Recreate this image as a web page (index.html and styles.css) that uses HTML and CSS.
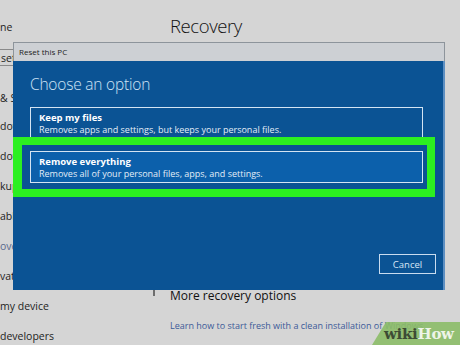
FILE: index.html
```html
<!DOCTYPE html>
<html lang="en">

<head>
    <meta charset="UTF-8">
    <meta name="viewport" content="width=device-width, initial-scale=1.0">
    <title>Recovery</title>
    <link rel="stylesheet" href="styles.css">
</head>

<body>
    <div class="page">
        <div class="sidebar">
            <p class="side-item home">ne</p>
            <div class="search">sett</div>
            <p class="side-item group">&amp; Se</p>
            <p class="side-item">dow</p>
            <p class="side-item">dow</p>
            <p class="side-item">kup</p>
            <p class="side-item">able</p>
            <p class="side-item active">ove</p>
            <p class="side-item">vat</p>
            <p class="side-item">my device</p>
            <p class="side-item">developers</p>
        </div>

        <div class="main">
            <h1 class="title">Recovery</h1>
            <div class="more">
                <span class="divider"></span>
                <h2>More recovery options</h2>
            </div>
            <a class="link" href="#">Learn how to start fresh with a clean installation of Windows</a>
        </div>
    </div>

    <div class="dialog">
        <div class="dialog-bar">Reset this PC</div>
        <div class="dialog-body">
            <h3 class="dialog-head">Choose an option</h3>
            <div class="option">
                <b>Keep my files</b>
                <span>Removes apps and settings, but keeps your personal files.</span>
            </div>
            <div class="option selected">
                <b>Remove everything</b>
                <span>Removes all of your personal files, apps, and settings.</span>
            </div>
            <div class="dialog-foot">
                <button class="cancel">Cancel</button>
            </div>
        </div>
    </div>

    <div class="badge"><span class="wiki">wiki</span><span class="how">How</span></div>
</body>

</html>
```

FILE: styles.css
```css
body {
    margin: 0;
    width: 460px;
    height: 345px;
    overflow: hidden;
    position: relative;
    background-color: #d5d5d5;
    font-family: "Open Sans", "Noto Sans", sans-serif;
    color: #1e1e1e;
}

.page {
    display: flex;
    height: 100%;
}

.sidebar {
    width: 153px;
    padding-top: 19px;
    font-size: 10.5px;
}

.side-item {
    margin: 0;
    height: 30px;
    line-height: 16px;
}

.side-item.group {
    margin-top: 24px;
    height: 28px;
}

.side-item.active {
    color: #5a6a8e;
}

.search {
    width: 150px;
    height: 17px;
    line-height: 17px;
    margin-left: -5px;
    padding-left: 5px;
    border: 1px solid #8a8a8a;
    box-sizing: border-box;
    font-size: 10.5px;
}

.main {
    padding-left: 17px;
    flex: 1;
}

.title {
    margin: 13px 0 0 0;
    font-size: 18.5px;
    font-weight: 300;
    letter-spacing: -0.4px;
    color: #111;
}

.more {
    display: flex;
    align-items: flex-start;
    margin-top: 246px;
}

.divider {
    width: 2px;
    height: 13px;
    margin-top: -1px;
    margin-left: -17px;
    margin-right: 15px;
    background-color: #6e6e6e;
}

.more h2 {
    margin: 3px 0 0 0;
    font-size: 12px;
    font-weight: 400;
    color: #111;
}

.link {
    display: block;
    margin-top: 15px;
    font-size: 9px;
    color: #3c5a98;
    text-decoration: none;
    white-space: nowrap;
}

.dialog {
    position: absolute;
    left: 13px;
    top: 42px;
    width: 432px;
    height: 248px;
    display: flex;
    flex-direction: column;
}

.dialog-bar {
    height: 18px;
    line-height: 18px;
    padding-left: 5px;
    background-color: #cdd0d4;
    border: 1px solid #8d949b;
    border-bottom: none;
    font-size: 8px;
    color: #222;
}

.dialog-body {
    flex: 1;
    display: flex;
    flex-direction: column;
    padding: 0 7px 16px 17px;
    background-color: #0b5394;
    border-right: 2px solid #5d8fc2;
    color: #eef4fa;
}

.dialog-head {
    margin: 12px 0 12px 0;
    font-size: 15.5px;
    font-weight: 300;
    letter-spacing: -0.2px;
    color: #cfe3f6;
}

.option {
    width: 393px;
    height: 33px;
    box-sizing: border-box;
    padding: 4px 8px;
    border: 1.5px solid #d4e4f3;
    display: flex;
    flex-direction: column;
    font-size: 9px;
    line-height: 12px;
    margin-bottom: 11px;
}

.option b {
    font-size: 9.5px;
    font-weight: 700;
    color: #ffffff;
}

.option span {
    color: #e3edf7;
}

.option.selected {
    position: relative;
    height: 32px;
    background-color: #0c60ab;
}

/* green marker around the chosen option */
.option.selected::after {
    content: "";
    position: absolute;
    left: -18px;
    right: -13px;
    top: -15px;
    bottom: -15px;
    border: 8px solid #2cf021;
    border-left-width: 9px;
}

.dialog-foot {
    margin-top: auto;
    display: flex;
    justify-content: flex-end;
}

.cancel {
    width: 57px;
    height: 20px;
    padding: 0;
    background-color: transparent;
    border: 1.5px solid #c9dcef;
    color: #d8e7f5;
    font-family: "Open Sans", "Noto Sans", sans-serif;
    font-size: 9.5px;
}

.badge {
    position: absolute;
    right: 0;
    bottom: 0;
    width: 88px;
    height: 23px;
    padding-left: 12px;
    box-sizing: border-box;
    background-color: rgba(140, 188, 104, 0.9);
    clip-path: polygon(14px 0, 100% 0, 100% 100%, 0 100%);
    font-family: "DejaVu Serif", "Liberation Serif", serif;
    font-weight: 700;
    font-size: 15px;
    line-height: 25px;
    letter-spacing: -0.3px;
}

.wiki {
    color: #3d4c34;
}

.how {
    color: #eef4e8;
}
```
